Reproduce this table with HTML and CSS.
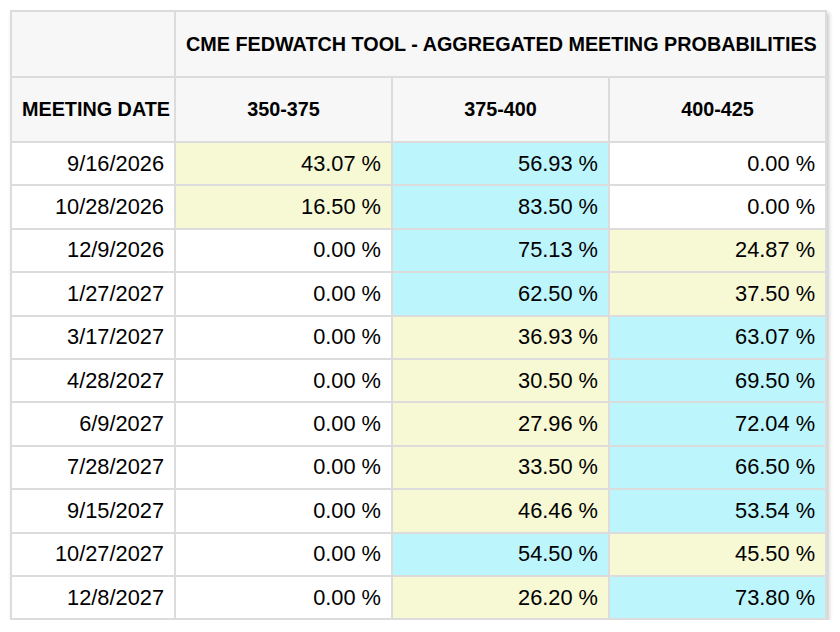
FILE: index.html
```html
<!DOCTYPE html>
<html>
<head>
<meta charset="utf-8">
<link rel="stylesheet" href="styles.css">
</head>
<body>
<table class="fw">
  <colgroup>
    <col class="c-date">
    <col class="c-rate">
    <col class="c-rate">
    <col class="c-rate">
  </colgroup>
  <thead>
    <tr class="h1">
      <th></th>
      <th colspan="3">CME FEDWATCH TOOL - AGGREGATED MEETING PROBABILITIES</th>
    </tr>
    <tr class="h2">
      <th>MEETING DATE</th>
      <th>350-375</th>
      <th>375-400</th>
      <th>400-425</th>
    </tr>
  </thead>
  <tbody>
    <tr><td>9/16/2026</td><td class="y">43.07 %</td><td class="c">56.93 %</td><td>0.00 %</td></tr>
    <tr><td>10/28/2026</td><td class="y">16.50 %</td><td class="c">83.50 %</td><td>0.00 %</td></tr>
    <tr><td>12/9/2026</td><td>0.00 %</td><td class="c">75.13 %</td><td class="y">24.87 %</td></tr>
    <tr><td>1/27/2027</td><td>0.00 %</td><td class="c">62.50 %</td><td class="y">37.50 %</td></tr>
    <tr><td>3/17/2027</td><td>0.00 %</td><td class="y">36.93 %</td><td class="c">63.07 %</td></tr>
    <tr><td>4/28/2027</td><td>0.00 %</td><td class="y">30.50 %</td><td class="c">69.50 %</td></tr>
    <tr><td>6/9/2027</td><td>0.00 %</td><td class="y">27.96 %</td><td class="c">72.04 %</td></tr>
    <tr><td>7/28/2027</td><td>0.00 %</td><td class="y">33.50 %</td><td class="c">66.50 %</td></tr>
    <tr><td>9/15/2027</td><td>0.00 %</td><td class="y">46.46 %</td><td class="c">53.54 %</td></tr>
    <tr><td>10/27/2027</td><td>0.00 %</td><td class="c">54.50 %</td><td class="y">45.50 %</td></tr>
    <tr><td>12/8/2027</td><td>0.00 %</td><td class="y">26.20 %</td><td class="c">73.80 %</td></tr>
  </tbody>
</table>
</body>
</html>
```
FILE: styles.css
```css
html, body {
  margin: 0;
  padding: 0;
  background: #ffffff;
}
body {
  padding: 10px 0 0 10px;
  font-family: "Liberation Sans", Arial, Helvetica, sans-serif;
  color: #000;
}
.fw {
  border-collapse: collapse;
  table-layout: fixed;
  width: 815px;
  background: #fff;
  box-shadow: 2px 3px 4px rgba(0, 0, 0, 0.22);
}
.c-date { width: 164px; }
.c-rate { width: 217px; }
.fw th,
.fw td {
  border: 2px solid #dcdcdc;
  padding: 0 10px;
  white-space: nowrap;
}
.fw th {
  background: #f7f7f7;
  font-weight: bold;
  font-size: 19.8px;
  text-align: center;
  vertical-align: middle;
}
.fw .h1 th { height: 64px; }
.fw .h2 th { height: 63px; }
.fw td {
  font-size: 21.8px;
  text-align: right;
  height: 41.4px;
  padding-right: 10px;
}
.fw td.y { background: #f7f8d4; }
.fw td.c { background: #bdf5fc; }
```
